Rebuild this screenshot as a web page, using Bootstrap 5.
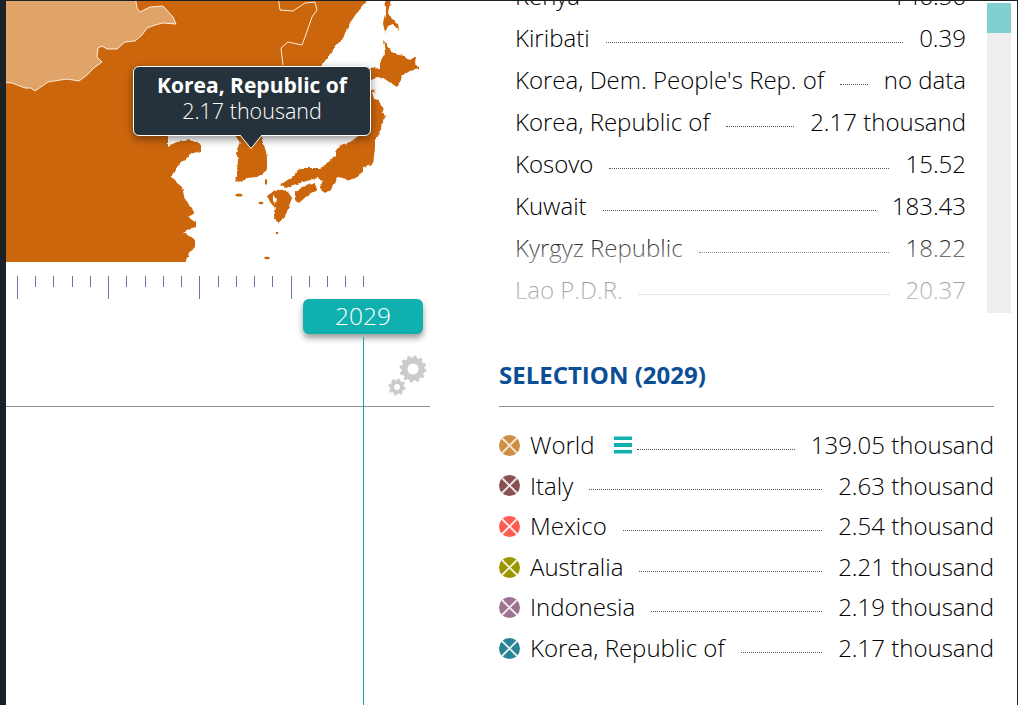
<!DOCTYPE html>
<html lang="en">
<head>
<meta charset="utf-8">
<title>Selection</title>
<link href="https://cdn.jsdelivr.net/npm/bootstrap@5.3.0/dist/css/bootstrap.min.css" rel="stylesheet">
<style>
html,body{height:705px;overflow:hidden;background:#fff}
body{font-family:"Open Sans","Liberation Sans",sans-serif;font-weight:300;color:#000;font-size:24px;border-top:1px solid #1a2226;border-right:1px solid #1a2226}
.shell{height:704px;border-left:6px solid #1a2226}
.leftpane{width:424px;flex:none}
.mapwrap{height:261px}
.mapsvg{display:block;width:424px;height:261px}
.tipbox{position:absolute;left:127px;top:65px;width:238px;height:70px;background:#25323b;border:1px solid #fff;border-radius:6px;color:#fff;text-align:center;box-shadow:0 3px 8px rgba(0,0,0,.45);line-height:26px;padding-top:5px;font-size:21.5px}
.tipbox b{display:block;font-weight:700;font-size:21px}
.tiparrow{position:absolute;left:233px;top:134px;width:24px;height:15px}
.ticks{margin:14px 0 0 11px;width:347.5px;height:23px}
.tick{width:1px;height:11px;background:#7373a3}
.tick-long{height:23px}
.yearbadge{margin-left:297px;width:120px;height:35px;background:#0fb0ae;color:#fff;border-radius:6px;box-shadow:0 4px 6px rgba(0,0,0,.4);line-height:34px;text-align:center;font-size:24.5px}
.gearrow{height:72px}
.gearsvg{width:44px;height:46px;margin:21px 0 0 380px;display:block}
.rule{height:1px;background:#8e8e8e}
.vline{position:absolute;left:357px;top:336px;bottom:0;width:1px;background:#12a7a9}
.rightpane{margin-left:69px;width:518px;flex:none}
.listzone{height:312px}
.listclip{width:467px;height:312px;padding-left:16px;overflow:hidden}
.listinner{margin-top:-26px}
.listrow{height:42px;line-height:42px;white-space:nowrap}
.leader{flex:1 1 auto;height:1px;border-bottom:1px dotted #555;margin:8px 16px 0 16px;min-width:0;align-self:center}
.listfade{position:absolute;left:0;top:200px;width:467px;height:112px;background:linear-gradient(rgba(255,255,255,0) 30%,rgba(255,255,255,.5) 52%,rgba(255,255,255,.7) 85%,#fff 100%)}
.sbar{width:24px;height:310px;margin:2px 5px 0 21px;background:#eee;flex:none}
.sthumb{height:30px;background:#7fd0ce}
.seltitle{color:#0a4f95;font-weight:700;font-size:24px;line-height:28px;margin:48px 0 16px;height:29px}
.selzone{width:495px}
.selrule{height:1px;background:#8e8e8e;margin-bottom:18px}
.selrow{height:40.6px;line-height:40.6px;white-space:nowrap}
.xdot{width:21px;height:21px;flex:none;margin-right:10px}
.burger{width:18px;height:18px;margin-left:19px;flex:none}
.leader-tight{margin-left:5px}
</style>
</head>
<body>
<div class="shell d-flex">
  <div class="leftpane position-relative d-flex flex-column">
    <div class="mapwrap position-relative">
      <svg class="mapsvg" viewBox="6 1 424 261" xmlns="http://www.w3.org/2000/svg" aria-label="Map of East Asia">
        <defs><filter id="rough" x="-5%" y="-5%" width="110%" height="110%"><feTurbulence type="fractalNoise" baseFrequency="0.18" numOctaves="2" seed="4"/><feDisplacementMap in="SourceGraphic" scale="3.5" xChannelSelector="R" yChannelSelector="G"/></filter></defs>
        <g filter="url(#rough)" fill="#cc6608">
        <path d="M0,-6 L372,-6 L366,1 L358,11 L350,23 L346,31 L343,37 L333,50 L322,65 L300,100 L280,120 L262,134 L262,140 L265,148 L267,157 L267,170 L262,174 L257,177 L247,178 L241,181 L235,183 L237,176 L237,170 L238,160 L236,152 L240,142 L233,134 L168,134 L168,146 L177,142 L184,141 L190,140 L201,144 L201,151 L190,154 L186,159 L180,163 L175,170 L171,177 L176,182 L182,187 L185,200 L192,209 L195,213 L188,217 L195,222 L195,227 L183,233 L190,236 L195,240 L195,247 L189,254 L184,266 L0,266 Z"/>
        <path d="M383,40 L387,45 L393,52 L410,60 L416,56 L415,63 L419,69 L410,71 L403,75 L397,87 L383,78 L377,77 L370,80 L368,69 L380,68 L380,62 L385,53 Z"/>
        <path d="M385,-6 L392,-6 L388,13 L392,20 L398,23 L399,31 L393,24 L388,26 L385,33 L383,23 L386,10 Z"/>
        <path d="M368,88 L374,90 L380,103 L385,117 L380,130 L375,140 L375,147 L373,165 L363,167 L363,173 L352,180 L337,177 L335,183 L330,190 L325,193 L320,188 L323,180 L317,178 L293,185 L285,188 L280,185 L292,177 L300,168 L320,168 L328,163 L335,155 L335,152 L340,145 L350,142 L360,135 L366,120 Z"/>
        <path d="M295,192 L303,187 L315,183 L317,190 L307,195 L298,203 L295,200 Z"/>
        <path fill-rule="evenodd" d="M267,195 L280,189 L288,192 L292,198 L285,217 L279,223 L273,218 L275,208 L270,202 Z M273,196 L277,199 L276,204 L273,201 Z"/>
        </g>
        <path fill="#fff" d="M372,92 L378,93 L378,100 L374,99 Z"/>
        <path fill="#e0a468" stroke="#fbeee0" stroke-width="1" d="M0,82 L12,83 L25,88 L31,88 L35,91 L48,82 L67,79 L79,81 L87,75 L95,67 L102,62 L97,57 L98,48 L102,46 L107,49 L117,49 L125,42 L135,41 L142,35 L147,28 L155,25 L163,23 L176,24 L173,17 L163,6 L150,7 L140,12 L137,8 L135,-4 L0,-4 Z"/>
        <path fill="none" stroke="#fbeee0" stroke-width="1" d="M278,-4 L280,10 L293,11 L305,3 L315,2 L317,10 L312,17 L305,37 L302,45 L288,42 L281,48 L283,65"/>
        <ellipse fill="#cc6608" cx="239" cy="195" rx="3.5" ry="1.6"/>
        <ellipse fill="#cc6608" cx="266" cy="182" rx="1.2" ry="3"/>
        <ellipse fill="#cc6608" cx="261" cy="203" rx="2.5" ry="1.2"/>
        <circle fill="#cc6608" cx="277" cy="233" r="1.3"/>
        <ellipse fill="#cc6608" cx="267" cy="258" rx="2.8" ry="1.2"/>
      </svg>
      <div class="tipbox"><b>Korea, Republic of</b>2.17 thousand</div>
      <svg class="tiparrow" viewBox="0 0 24 15" xmlns="http://www.w3.org/2000/svg" aria-hidden="true">
        <path fill="#25323b" stroke="#fff" stroke-width="1" d="M1,0 L12,13.5 L23,0"/>
      </svg>
    </div>
    <div class="ticks d-flex justify-content-between align-items-start">
      <span class="tick tick-long"></span><span class="tick"></span><span class="tick"></span><span class="tick"></span><span class="tick"></span>
      <span class="tick tick-long"></span><span class="tick"></span><span class="tick"></span><span class="tick"></span><span class="tick"></span>
      <span class="tick tick-long"></span><span class="tick"></span><span class="tick"></span><span class="tick"></span><span class="tick"></span>
      <span class="tick tick-long"></span><span class="tick"></span><span class="tick"></span><span class="tick"></span><span class="tick"></span>
    </div>
    <div class="yearbadge">2029</div>
    <div class="gearrow">
      <svg class="gearsvg" viewBox="0 0 44 46" xmlns="http://www.w3.org/2000/svg" aria-hidden="true">
        <g fill="none" stroke="#cbcbcb">
          <circle cx="27" cy="14" r="8.5" stroke-width="6"/>
          <circle cx="27" cy="14" r="12.2" stroke-width="2.6" stroke-dasharray="3.2 3.19"/>
          <circle cx="11" cy="32" r="5" stroke-width="4"/>
          <circle cx="11" cy="32" r="7.6" stroke-width="2" stroke-dasharray="3 2.97"/>
        </g>
      </svg>
    </div>
    <div class="rule"></div>
    <div class="vline"></div>
  </div>

  <div class="rightpane">
    <div class="listzone d-flex">
      <div class="position-relative">
        <div class="listclip">
          <div class="listinner">
            <div class="listrow d-flex"><span>Kenya</span><span class="leader"></span><span>146.56</span></div>
            <div class="listrow d-flex"><span>Kiribati</span><span class="leader"></span><span>0.39</span></div>
            <div class="listrow d-flex"><span>Korea, Dem. People's Rep. of</span><span class="leader"></span><span>no data</span></div>
            <div class="listrow d-flex"><span>Korea, Republic of</span><span class="leader"></span><span>2.17 thousand</span></div>
            <div class="listrow d-flex"><span>Kosovo</span><span class="leader"></span><span>15.52</span></div>
            <div class="listrow d-flex"><span>Kuwait</span><span class="leader"></span><span>183.43</span></div>
            <div class="listrow d-flex"><span>Kyrgyz Republic</span><span class="leader"></span><span>18.22</span></div>
            <div class="listrow d-flex"><span>Lao P.D.R.</span><span class="leader"></span><span>20.37</span></div>
          </div>
        </div>
        <div class="listfade"></div>
      </div>
      <div class="sbar"><div class="sthumb"></div></div>
    </div>
    <div class="selzone">
      <div class="seltitle">SELECTION (2029)</div>
      <div class="selrule"></div>
      <div class="selrow d-flex align-items-center">
        <svg class="xdot" viewBox="0 0 21 21" xmlns="http://www.w3.org/2000/svg" aria-hidden="true"><circle cx="10.5" cy="10.5" r="10.5" fill="#cc9044"/><path d="M3,3 L18,18 M18,3 L3,18" stroke="#f5e9da" stroke-width="1.8"/></svg>
        <span>World</span>
        <svg class="burger" viewBox="0 0 18 18" xmlns="http://www.w3.org/2000/svg" aria-hidden="true"><path d="M0,0.5h18v3.5h-18z M0,7h18v4h-18z M0,14h18v3.5h-18z" fill="#0fb0ae"/></svg>
        <span class="leader leader-tight"></span><span>139.05 thousand</span>
      </div>
      <div class="selrow d-flex align-items-center">
        <svg class="xdot" viewBox="0 0 21 21" xmlns="http://www.w3.org/2000/svg" aria-hidden="true"><circle cx="10.5" cy="10.5" r="10.5" fill="#885252"/><path d="M3,3 L18,18 M18,3 L3,18" stroke="#f5e9e9" stroke-width="1.8"/></svg>
        <span>Italy</span><span class="leader"></span><span>2.63 thousand</span>
      </div>
      <div class="selrow d-flex align-items-center">
        <svg class="xdot" viewBox="0 0 21 21" xmlns="http://www.w3.org/2000/svg" aria-hidden="true"><circle cx="10.5" cy="10.5" r="10.5" fill="#ff5b50"/><path d="M3,3 L18,18 M18,3 L3,18" stroke="#fff0ee" stroke-width="1.8"/></svg>
        <span>Mexico</span><span class="leader"></span><span>2.54 thousand</span>
      </div>
      <div class="selrow d-flex align-items-center">
        <svg class="xdot" viewBox="0 0 21 21" xmlns="http://www.w3.org/2000/svg" aria-hidden="true"><circle cx="10.5" cy="10.5" r="10.5" fill="#9a9600"/><path d="M3,3 L18,18 M18,3 L3,18" stroke="#f7f6dd" stroke-width="1.8"/></svg>
        <span>Australia</span><span class="leader"></span><span>2.21 thousand</span>
      </div>
      <div class="selrow d-flex align-items-center">
        <svg class="xdot" viewBox="0 0 21 21" xmlns="http://www.w3.org/2000/svg" aria-hidden="true"><circle cx="10.5" cy="10.5" r="10.5" fill="#9c7390"/><path d="M3,3 L18,18 M18,3 L3,18" stroke="#f5edf2" stroke-width="1.8"/></svg>
        <span>Indonesia</span><span class="leader"></span><span>2.19 thousand</span>
      </div>
      <div class="selrow d-flex align-items-center">
        <svg class="xdot" viewBox="0 0 21 21" xmlns="http://www.w3.org/2000/svg" aria-hidden="true"><circle cx="10.5" cy="10.5" r="10.5" fill="#2a8296"/><path d="M3,3 L18,18 M18,3 L3,18" stroke="#e6f3f5" stroke-width="1.8"/></svg>
        <span>Korea, Republic of</span><span class="leader"></span><span>2.17 thousand</span>
      </div>
    </div>
  </div>
</div>
<script src="https://cdn.jsdelivr.net/npm/bootstrap@5.3.0/dist/js/bootstrap.bundle.min.js"></script>
</body>
</html>
